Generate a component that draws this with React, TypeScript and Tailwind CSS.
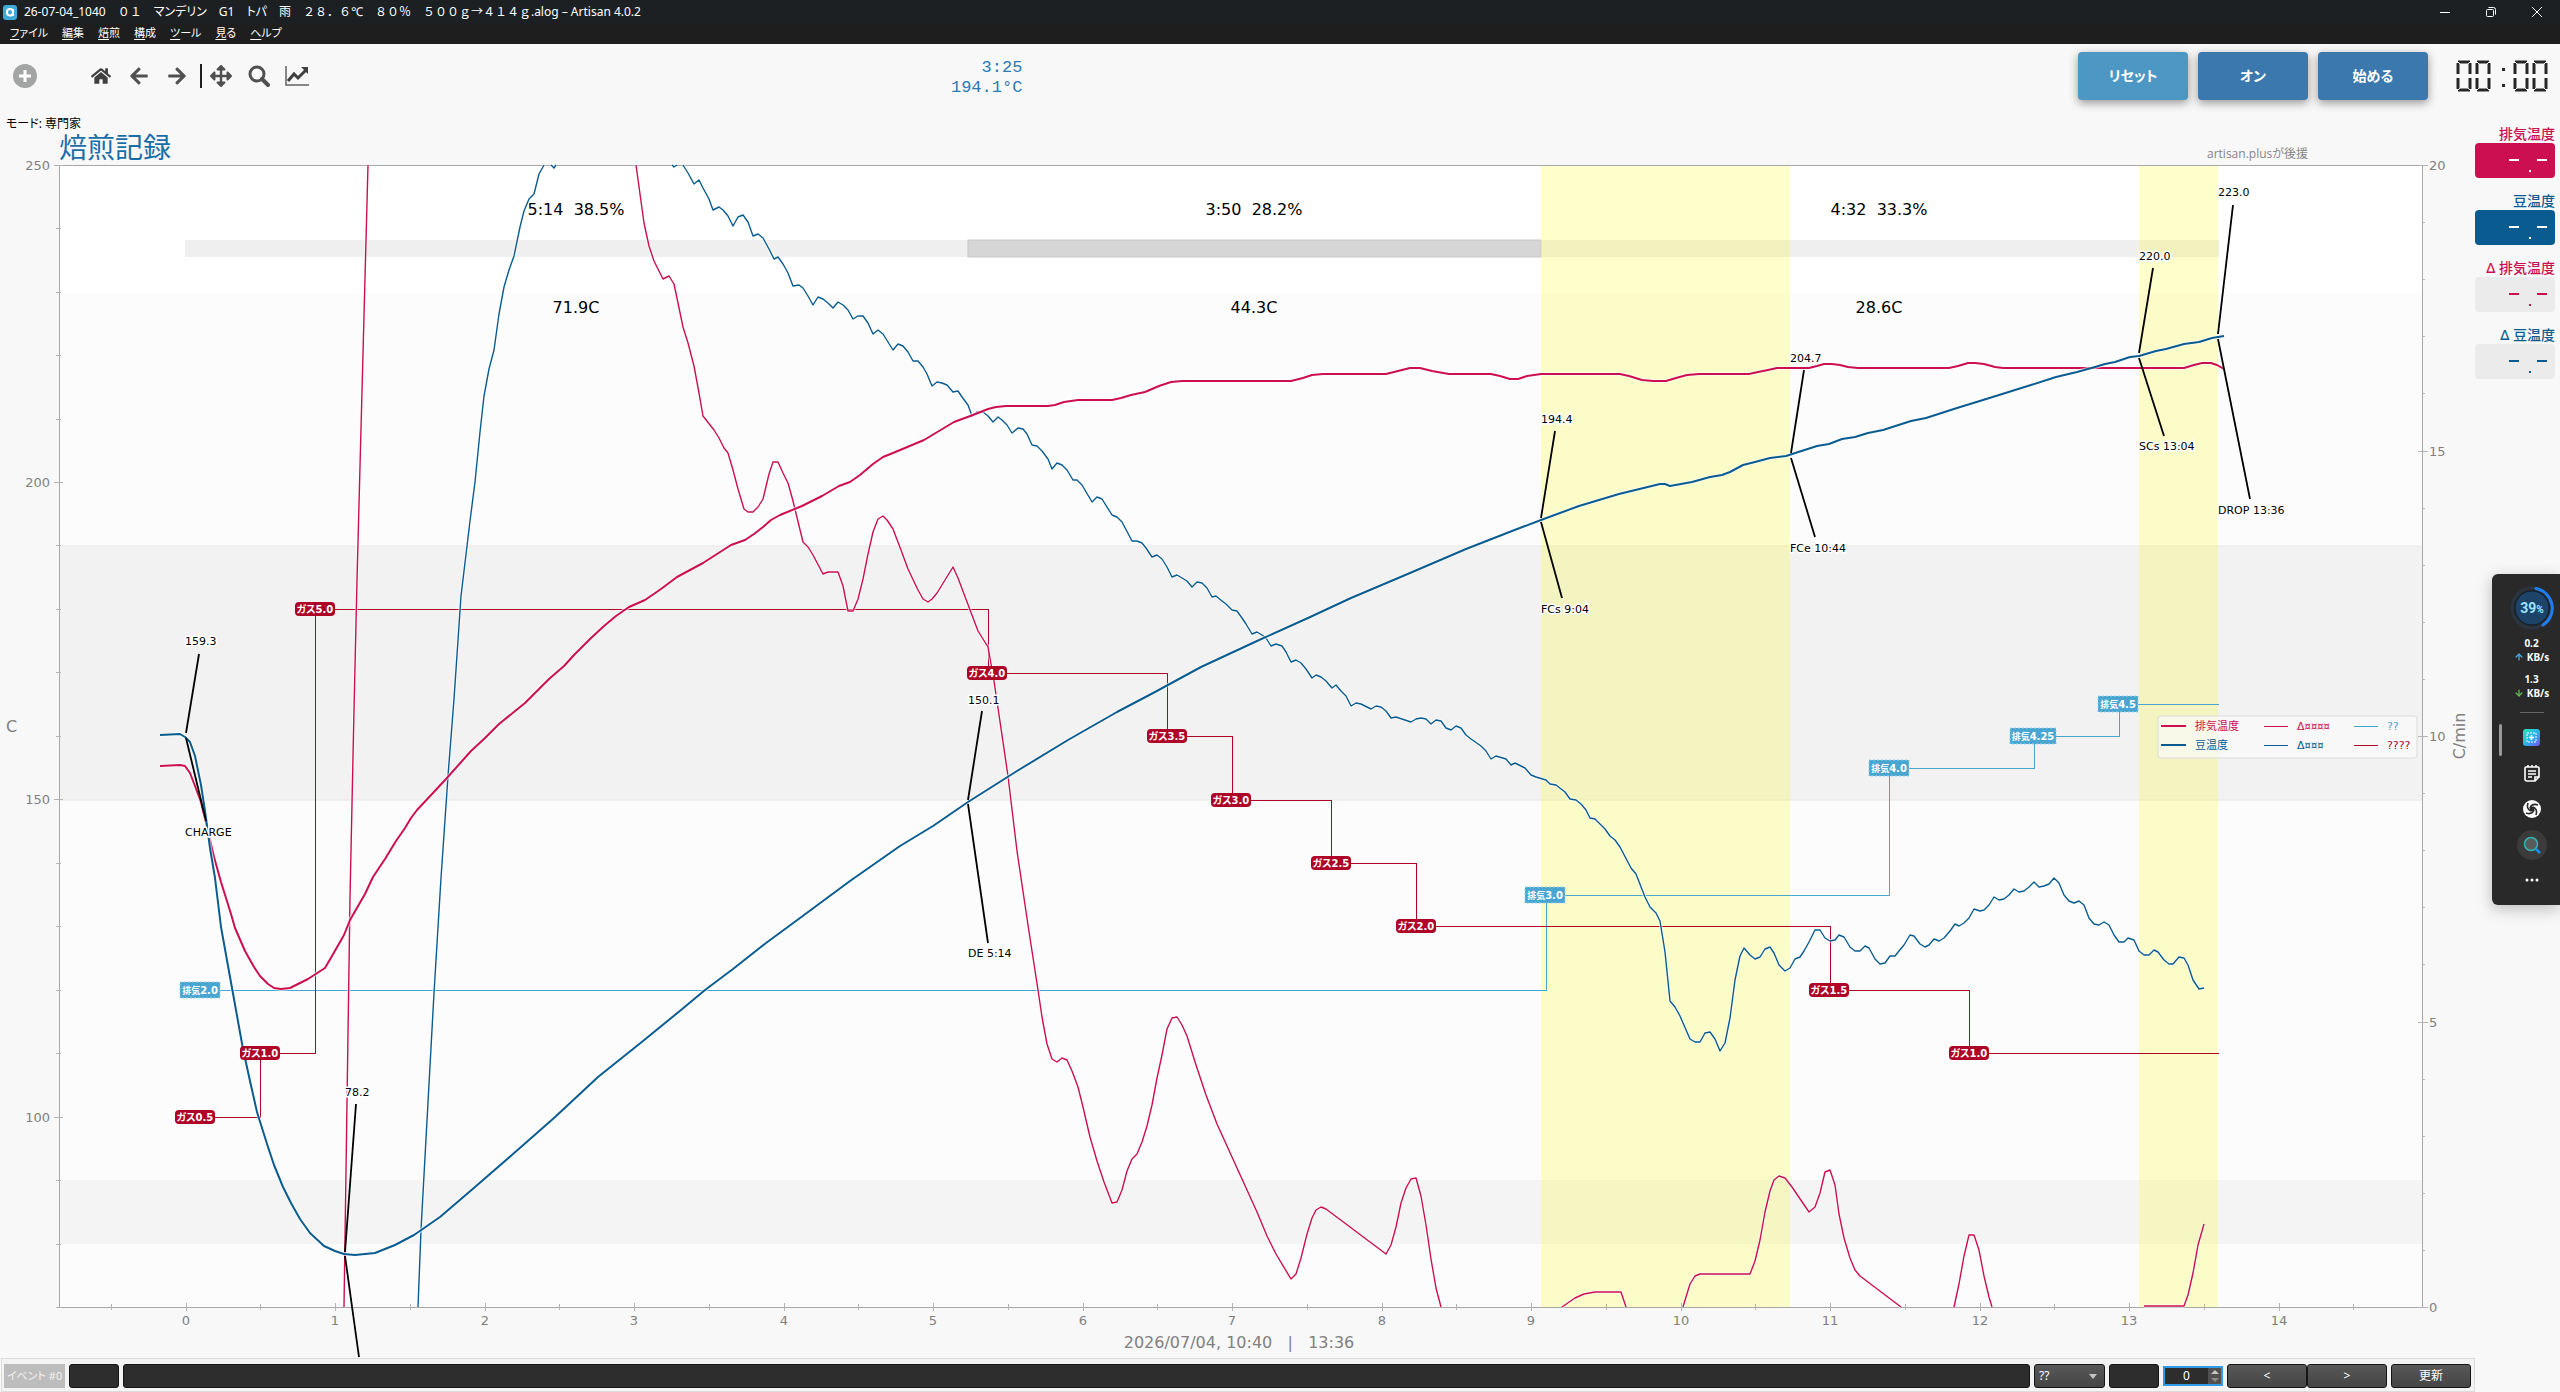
import React from "react";
import { FaArrowLeft, FaArrowRight, FaArrowsAlt, FaHome } from "react-icons/fa";
import { ArrowDown, ArrowUp } from "lucide-react";

// Chart space: one unit of time is one minute, temperatures run 70..250 °C
const LEFT = 59;
const RIGHT = 2422;
const TOP = 165;
const BOTTOM = 1307;
const timeX = (min: number) => Math.round(185.5 + min * 149.5);
const tempY = (temp: number) => Math.round(BOTTOM - (temp - 70) * 6.346);
const rateY = (rate: number) => Math.round(BOTTOM - rate * 57.1);

const ET = "#cc0f50";
const BT = "#0a5c90";
const GAS = "#ad0427";
const AIR = "#49a6d0";

const etCurve =
  "160,766 180,765 185,766 190,773 195,786 201,802 206,823 214,857 221,882 231,914 235,928 245,951 254,967 260,976 268,984 274,988 281,989 290,988 308,979 325,968 332,956 344,935 350,920 365,894 373,877 385,859 396,841 405,828 411,818 417,810 432,794 446,779 471,751 485,738 499,724 525,703 549,679 564,666 574,655 582,647 590,639 604,626 616,616 629,607 645,600 661,589 677,577 703,563 731,545 745,540 754,534 763,527 771,520 780,515 802,506 822,496 839,486 850,482 860,475 873,464 883,457 893,453 924,440 954,422 973,415 988,409 996,407 1006,406 1048,406 1055,405 1064,402 1078,400 1112,400 1121,398 1131,395 1145,392 1159,386 1171,382 1182,381 1291,381 1303,378 1312,375 1323,374 1386,374 1398,371 1410,368 1420,368 1432,371 1449,374 1491,374 1500,376 1510,379 1518,379 1527,376 1541,374 1620,374 1629,376 1642,380 1653,381 1666,381 1676,378 1687,375 1699,374 1749,374 1758,372 1768,370 1777,368 1809,368 1817,366 1824,364 1832,364 1840,365 1848,367 1858,368 1949,368 1958,366 1968,363 1975,363 1984,364 1995,367 2003,368 2184,368 2194,365 2202,363 2211,363 2217,365 2224,369";

const btCurve =
  "160,735 180,734 185,737 190,742 195,756 201,785 205,811 210,848 215,878 221,927 232,988 243,1049 250,1081 257,1112 262,1128 268,1147 274,1165 283,1187 291,1203 300,1219 310,1233 324,1246 335,1251 344,1254 355,1255 375,1253 395,1245 414,1235 440,1217 475,1187 513,1154 554,1118 598,1077 643,1041 681,1010 705,990 733,969 766,943 800,918 850,881 900,846 933,826 968,802 1017,771 1068,740 1117,712 1155,692 1201,667 1257,641 1308,618 1351,598 1410,573 1466,549 1512,531 1541,520 1579,506 1619,494 1660,484 1665,484 1670,486 1692,482 1710,477 1722,475 1730,472 1743,465 1755,462 1770,458 1786,456 1817,446 1829,444 1842,439 1855,437 1868,433 1883,430 1911,421 1926,418 1957,408 1983,400 2031,385 2056,377 2077,372 2095,367 2105,364 2115,362 2130,357 2139,356 2156,351 2166,349 2184,344 2199,342 2212,338 2224,336";

const deltaEt = [
  "344,1307 350,898 354,710 357,580 368,165",
  "636,165 644,223 649,246 654,261 663,279 669,276 674,284 678,303 683,327 688,343 694,366 699,393 703,416 714,430 719,438 724,448 728,453 733,470 738,489 744,509 748,512 753,512 758,507 763,499 769,474 773,462 778,462 783,473 788,483 793,501 803,542 808,547 813,555 823,574 828,572 838,572 843,586 848,611 853,611 858,599 863,579 868,554 873,532 878,519 883,516 887,520 893,529 901,550 908,569 918,590 923,599 928,602 932,599 937,593 953,567 958,578 978,631 988,647 994,681 998,708 1008,776 1017,851 1028,925 1038,990 1042,1017 1047,1044 1052,1059 1057,1062 1062,1058 1067,1060 1072,1071 1078,1087 1083,1107 1090,1137 1097,1161 1104,1182 1112,1203 1117,1202 1122,1190 1127,1171 1132,1159 1137,1154 1142,1142 1147,1126 1152,1105 1157,1078 1162,1055 1167,1029 1172,1018 1177,1017 1182,1025 1187,1036 1196,1065 1206,1095 1217,1124 1232,1157 1257,1212 1267,1236 1276,1254 1291,1279 1296,1274 1301,1258 1307,1234 1312,1218 1316,1210 1321,1207 1326,1209 1386,1254 1391,1245 1396,1227 1401,1203 1406,1188 1411,1179 1416,1178 1421,1196 1426,1225 1431,1259 1436,1288 1441,1307",
  "1562,1307 1575,1298 1584,1294 1595,1292 1621,1292 1626,1307",
  "1683,1307 1686,1297 1690,1284 1695,1276 1700,1274 1750,1274 1755,1261 1760,1240 1765,1212 1770,1191 1774,1180 1779,1176 1785,1178 1792,1187 1809,1212 1815,1207 1820,1193 1825,1172 1830,1170 1835,1185 1839,1214 1844,1238 1850,1258 1855,1270 1860,1276 1901,1307",
  "1954,1307 1959,1284 1964,1256 1969,1235 1974,1235 1979,1250 1984,1276 1989,1297 1992,1307",
  "2144,1306 2184,1306 2188,1295 2193,1273 2198,1245 2204,1224",
];

const deltaBt = [
  "418,1307 421,1230 434,993 441,878 448,776 454,699 461,596 470,521 475,482 480,432 484,396 489,369 494,350 499,314 504,287 509,270 514,256 520,227 524,211 529,199 534,194 539,174 544,165",
  "551,165 554,168 556,165",
  "672,165 674,167 677,165",
  "683,165 688,173 694,184 699,180 703,188 709,199 713,210 719,207 723,210 728,216 733,226 738,217 743,215 748,222 753,236 758,234 763,238 769,249 774,259 778,257 783,264 788,273 793,286 799,285 803,288 808,296 813,305 818,297 823,299 828,303 833,308 838,302 843,305 848,310 853,319 858,316 863,316 868,323 873,334 878,330 883,334 893,350 898,344 903,346 908,352 913,361 918,361 923,367 927,374 932,386 937,382 942,383 947,385 953,392 958,391 962,397 968,405 972,416 977,412 983,412 988,416 993,422 998,417 1002,420 1007,425 1012,433 1018,428 1023,429 1027,434 1032,445 1037,446 1042,451 1048,459 1052,469 1057,463 1062,465 1067,470 1073,480 1077,480 1082,485 1092,502 1097,497 1102,499 1112,515 1117,517 1122,522 1132,541 1137,541 1142,543 1146,548 1152,557 1157,555 1162,559 1167,567 1172,577 1177,575 1182,578 1187,581 1192,587 1197,582 1202,583 1207,588 1212,597 1216,596 1222,601 1226,604 1232,610 1237,611 1242,618 1246,624 1252,634 1257,632 1262,635 1266,638 1271,646 1276,644 1282,646 1286,652 1291,662 1296,660 1301,663 1306,669 1312,678 1316,675 1321,677 1326,681 1332,688 1336,685 1341,691 1346,696 1351,706 1356,703 1361,704 1371,709 1376,706 1381,707 1386,711 1391,718 1396,717 1411,722 1416,719 1421,718 1426,719 1431,724 1436,720 1441,721 1446,728 1451,730 1456,726 1461,728 1466,735 1471,739 1481,746 1486,751 1491,759 1496,756 1506,759 1511,765 1515,763 1525,768 1531,775 1536,777 1546,780 1550,784 1556,785 1565,792 1570,799 1576,800 1581,804 1586,810 1590,818 1595,819 1605,829 1610,836 1615,840 1620,847 1631,868 1636,874 1645,897 1650,907 1656,913 1660,921 1665,952 1670,1001 1675,1007 1680,1016 1690,1039 1695,1042 1700,1042 1705,1033 1710,1032 1715,1039 1720,1051 1725,1043 1730,1018 1735,980 1740,956 1744,948 1750,955 1755,959 1760,957 1765,949 1770,947 1774,953 1779,965 1785,971 1790,968 1795,959 1800,957 1804,951 1809,942 1815,930 1820,930 1825,938 1830,941 1835,940 1839,935 1844,937 1850,947 1855,951 1860,951 1865,946 1869,948 1875,959 1880,964 1885,963 1890,956 1895,956 1899,951 1904,945 1910,935 1914,936 1920,944 1925,947 1929,945 1934,939 1939,941 1944,938 1950,931 1955,924 1959,926 1964,923 1969,918 1974,909 1980,911 1984,910 1989,905 1994,897 1999,900 2004,899 2009,895 2014,889 2019,892 2024,891 2029,887 2034,882 2039,887 2044,886 2049,884 2054,878 2059,883 2064,895 2069,901 2074,903 2079,901 2084,905 2089,918 2094,924 2099,925 2104,922 2109,925 2114,935 2119,942 2124,942 2128,938 2134,940 2139,951 2144,955 2149,955 2154,950 2158,952 2164,960 2169,964 2173,964 2179,957 2184,958 2188,965 2193,980 2199,989 2204,988",
];

const gasSteps =
  "195,1117 260,1117 260,1053 315,1053 315,609 988,609 988,673 1167,673 1167,736 1232,736 1232,800 1331,800 1331,863 1416,863 1416,926 1830,926 1830,990 1969,990 1969,1053 2219,1053";
const airSteps =
  "200,990 1546,990 1546,895 1889,895 1889,768 2034,768 2034,736 2119,736 2119,704 2219,704";

const gasTags: [number, number, string][] = [
  [195, 1117, "0.5"],
  [260, 1053, "1.0"],
  [315, 609, "5.0"],
  [987, 673, "4.0"],
  [1167, 736, "3.5"],
  [1231, 800, "3.0"],
  [1331, 863, "2.5"],
  [1416, 926, "2.0"],
  [1829, 990, "1.5"],
  [1969, 1053, "1.0"],
];

const airTags: [number, number, string][] = [
  [200, 990, "2.0"],
  [1545, 895, "3.0"],
  [1889, 768, "4.0"],
  [2033, 736, "4.25"],
  [2118, 704, "4.5"],
];

// label, text x, text centre y, leader from x1,y1 to x2,y2
const notes: [string, number, number, number, number, number, number][] = [
  ["159.3", 185, 641, 199, 654, 186, 733],
  ["CHARGE", 185, 832, 186, 738, 206, 821],
  ["78.2", 345, 1092, 356, 1104, 345, 1252],
  ["", 0, 0, 345, 1256, 359, 1357],
  ["150.1", 968, 700, 982, 711, 968, 800],
  ["DE 5:14", 968, 953, 968, 804, 988, 943],
  ["194.4", 1541, 419, 1555, 431, 1541, 518],
  ["FCs 9:04", 1541, 609, 1541, 522, 1562, 598],
  ["204.7", 1790, 358, 1804, 370, 1791, 453],
  ["FCe 10:44", 1790, 548, 1791, 458, 1815, 537],
  ["220.0", 2139, 256, 2153, 268, 2139, 353],
  ["SCs 13:04", 2139, 446, 2139, 358, 2164, 436],
  ["223.0", 2218, 192, 2233, 205, 2218, 334],
  ["DROP 13:36", 2218, 510, 2218, 339, 2250, 499],
];

const phases = [
  { x: 576, time: "5:14\u00a0\u00a038.5%", rise: "71.9C" },
  { x: 1254, time: "3:50\u00a0\u00a028.2%", rise: "44.3C" },
  { x: 1879, time: "4:32\u00a0\u00a033.3%", rise: "28.6C" },
];

const range = (from: number, to: number, step: number) => {
  const out: number[] = [];
  for (let v = from; v <= to; v += step) out.push(v);
  return out;
};

const Curve = ({ points, color, width }: { points: string; color: string; width: number }) => (
  <g fill="none" strokeLinejoin="round">
    <polyline points={points} stroke="#fff" strokeOpacity={0.6} strokeWidth={width + 2} />
    <polyline points={points} stroke={color} strokeWidth={width} />
  </g>
);

const Axes = () => (
  <g>
    <g stroke="#a8a8a8" strokeWidth={1} shapeRendering="crispEdges">
      <line x1={LEFT} y1={TOP} x2={RIGHT} y2={TOP} />
      <line x1={LEFT} y1={BOTTOM} x2={RIGHT} y2={BOTTOM} />
      <line x1={LEFT} y1={TOP} x2={LEFT} y2={BOTTOM} />
      <line x1={RIGHT} y1={TOP} x2={RIGHT} y2={BOTTOM} />
    </g>
    <g stroke="#b4b4b4" strokeWidth={1} shapeRendering="crispEdges">
      {range(70, 250, 10).map((t) => (
        <line
          key={t}
          x1={t % 50 ? 56 : 54}
          x2={t % 50 ? 61 : 63}
          y1={tempY(t)}
          y2={tempY(t)}
        />
      ))}
      {range(0, 20, 1).map((r) => (
        <line
          key={r}
          x1={r % 5 ? 2422 : 2418}
          x2={r % 5 ? 2425 : 2428}
          y1={rateY(r)}
          y2={rateY(r)}
        />
      ))}
      {range(-0.5, 14.5, 0.5).map((m) => (
        <line
          key={m}
          x1={timeX(m)}
          x2={timeX(m)}
          y1={m % 1 ? 1304 : 1303}
          y2={m % 1 ? 1310 : 1311}
        />
      ))}
    </g>
    <g fill="#808080" fontSize={13}>
      {[250, 200, 150, 100].map((t) => (
        <text key={t} x={50} y={tempY(t) + 5} textAnchor="end">
          {t}
        </text>
      ))}
      {[20, 15, 10, 5, 0].map((r) => (
        <text key={r} x={2429} y={rateY(r) + 5}>
          {r}
        </text>
      ))}
      {range(0, 14, 1).map((m) => (
        <text key={m} x={timeX(m)} y={1325} textAnchor="middle">
          {m}
        </text>
      ))}
    </g>
    <g fill="#808080" fontSize={16}>
      <text x={6} y={732}>
        C
      </text>
      <text transform="translate(2465 736) rotate(-90)" textAnchor="middle">
        C/min
      </text>
      <text x={1239} y={1348} textAnchor="middle">
        {"2026/07/04, 10:40\u00a0\u00a0\u00a0|\u00a0\u00a0\u00a013:36"}
      </text>
    </g>
  </g>
);

const Legend = () => (
  <g fontSize={11}>
    <rect x={2158} y={716} width={259} height={42} rx={3} fill="#fbfbfb" fillOpacity={0.7} stroke="#dcdcdc" />
    <g strokeWidth={2}>
      <line x1={2161} x2={2186} y1={726} y2={726} stroke={ET} />
      <line x1={2161} x2={2186} y1={745} y2={745} stroke={BT} />
    </g>
    <g strokeWidth={1} shapeRendering="crispEdges">
      <line x1={2264} x2={2288} y1={726} y2={726} stroke={ET} />
      <line x1={2264} x2={2288} y1={745} y2={745} stroke={BT} />
      <line x1={2354} x2={2378} y1={726} y2={726} stroke={AIR} />
      <line x1={2354} x2={2378} y1={745} y2={745} stroke={GAS} />
    </g>
    <text x={2195} y={730} fill={ET}>排気温度</text>
    <text x={2195} y={749} fill={BT}>豆温度</text>
    <text x={2297} y={730} fill={ET}>Δ<tspan fontSize={10}>¤¤¤¤</tspan></text>
    <text x={2297} y={749} fill={BT}>Δ<tspan fontSize={10}>¤¤¤</tspan></text>
    <text x={2387} y={730} fill={AIR}>??</text>
    <text x={2387} y={749} fill={GAS}>????</text>
  </g>
);

const RoastChart = () => (
  <svg
    viewBox="0 132 2475 1226"
    className="block w-full h-auto font-['DejaVu_Sans','Noto_Sans_CJK_JP',sans-serif]"
    role="img"
    aria-label="焙煎記録"
  >
    <rect x={LEFT} y={TOP} width={RIGHT - LEFT} height={BOTTOM - TOP} fill="#fcfcfc" />
    <rect x={LEFT} y={TOP} width={RIGHT - LEFT} height={128} fill="#ffffff" />
    <rect x={LEFT} y={546} width={RIGHT - LEFT} height={254} fill="#f2f2f2" />
    <rect x={LEFT} y={1180} width={RIGHT - LEFT} height={64} fill="#f4f4f4" />
    <path d={`M${LEFT} 546H${RIGHT}M${LEFT} 800H${RIGHT}`} stroke="#e8e8e8" />

    <rect x={185} y={240} width={783} height={17} fill="#efefef" />
    <rect x={968} y={240} width={573} height={17} fill="#d6d6d6" stroke="#c8c8c8" />
    <rect x={1542} y={240} width={677} height={17} fill="#efefef" />
    <g fill="#ffff00" fillOpacity={0.2}>
      <rect x={1541} y={TOP} width={249} height={BOTTOM - TOP} />
      <rect x={2139} y={TOP} width={79} height={BOTTOM - TOP} />
    </g>
    <Axes />

    <g fill="none" strokeWidth={1} shapeRendering="crispEdges">
      <polyline points={airSteps} stroke={AIR} />
      <polyline points={gasSteps} stroke={GAS} />
    </g>
    {deltaEt.map((p) => (
      <Curve key={p} points={p} color={ET} width={1.4} />
    ))}
    {deltaBt.map((p) => (
      <Curve key={p} points={p} color={BT} width={1.4} />
    ))}
    <Curve points={etCurve} color={ET} width={2} />
    <Curve points={btCurve} color={BT} width={2} />

    {gasTags.map(([x, y, value]) => (
      <g key={`${x}-${y}`}>
        <rect x={x - 20} y={y - 7} width={40} height={14} rx={4} fill={GAS} />
        <text x={x} y={y + 4} textAnchor="middle" fill="#fff" fontSize={10} fontWeight={700}>
          ガス{value}
        </text>
      </g>
    ))}
    {airTags.map(([x, y, value]) => {
      const w = value.length > 3 ? 46 : 40;
      return (
        <g key={`${x}-${y}`}>
          <rect
            x={x - w / 2}
            y={y - 8}
            width={w}
            height={16}
            fill={AIR}
            stroke="#9fd0e6"
            strokeDasharray="2 2"
          />
          <text x={x} y={y + 4} textAnchor="middle" fill="#fff" fontSize={10} fontWeight={700}>
            <tspan fontSize={9}>排気</tspan>
            {value}
          </text>
        </g>
      );
    })}

    {notes.map(([label, x, y, x1, y1, x2, y2]) => (
      <g key={`${x1}-${y1}`}>
        <line x1={x1} y1={y1} x2={x2} y2={y2} stroke="#000" strokeWidth={1.8} />
        {label && (
          <text x={x} y={y + 4} fontSize={11} stroke="#fff" strokeWidth={3} style={{ paintOrder: "stroke" }}>
            {label}
          </text>
        )}
      </g>
    ))}
    {phases.map((p) => (
      <g key={p.x} fontSize={16} textAnchor="middle">
        <text x={p.x} y={215}>{p.time}</text>
        <text x={p.x} y={313}>{p.rise}</text>
      </g>
    ))}

    <text x={59} y={158} fontSize={28} fill="#1a6ea8" fontFamily="Liberation Sans, Noto Sans CJK JP">
      焙煎記録
    </text>
    <text x={2308} y={158} fontSize={12} fill="#858585" textAnchor="end" fontFamily="Open Sans, Noto Sans CJK JP">
      artisan.plusが後援
    </text>
    <Legend />
  </svg>
);

// Bars of one clock digit: x1, y1, x2, y2
const CLOCK_BARS = [
  [2, 2, 14, 2],
  [14, 3, 14, 14],
  [14, 18, 14, 29],
  [2, 30, 14, 30],
  [2, 18, 2, 29],
  [2, 3, 2, 14],
];

const ClockDigit = ({ x }: { x: number }) => (
  <g transform={`translate(${x} 0)`}>
    {CLOCK_BARS.map(([x1, y1, x2, y2]) => (
      <line key={`${x1}-${y1}-${y2}`} x1={x1} y1={y1} x2={x2} y2={y2} stroke="#262626" strokeWidth={3} />
    ))}
    <path d="M0 0l4 4M16 0l-4 4M0 32l4-4M16 32l-4-4" stroke="#f8f8f8" />
  </g>
);

const Clock = () => (
  <div role="timer" aria-label="00:00">
    <svg width={92} height={32} viewBox="0 0 92 32">
      <ClockDigit x={0} />
      <ClockDigit x={19} />
      <path d="M46 8h3v3h-3zM46 24h3v3h-3z" fill="#262626" />
      <ClockDigit x={57} />
      <ClockDigit x={76} />
    </svg>
  </div>
);

const readouts = [
  { label: "排気温度", text: "text-[#cc0f50]", box: "bg-[#cc0f50] text-white" },
  { label: "豆温度", text: "text-[#0a5c90]", box: "bg-[#0a5c90] text-white" },
  { label: "Δ 排気温度", text: "text-[#cc0f50]", box: "bg-[#ebebeb] text-[#cc0f50]" },
  { label: "Δ 豆温度", text: "text-[#0a5c90]", box: "bg-[#ebebeb] text-[#0a5c90]" },
];

const Readouts = () => (
  <aside className="w-[85px] shrink-0 pt-2 pr-[5px]">
    {readouts.map((r) => (
      <div key={r.label} className="h-[67px]">
        <p className={`text-right text-sm leading-[19px] font-medium whitespace-nowrap ${r.text}`}>{r.label}</p>
        <div className={`h-[35px] rounded-[4px] flex items-center justify-end ${r.box}`}>
          <svg width={80} height={35} stroke="currentColor" strokeWidth={2}>
            <path d="M34 17h10M54 28h2M62 17h10" />
          </svg>
        </div>
      </div>
    ))}
  </aside>
);

const menus = [
  ["フ", "ァイル"],
  ["編集", ""],
  ["焙煎", ""],
  ["構成", ""],
  ["ツ", "ール"],
  ["見る", ""],
  ["ヘ", "ルプ"],
];

const TitleBar = () => (
  <header className="h-11 bg-[#1e1e1e] text-white text-xs">
    <div className="h-6 flex items-center bg-[#1c2023] pl-[3px]">
      <svg width={14} height={15} viewBox="0 0 14 15" className="mr-[7px]">
        <rect width={14} height={15} rx={3} fill="#3fa9d8" />
        <path d="M10 4v7M10 8a3 3 0 1 1-6-1a3 3 0 0 1 6 0" fill="none" stroke="#fff" strokeWidth={2} />
      </svg>
      <h1 className="flex-1 whitespace-pre [font-feature-settings:normal]">
        26-07-04_1040　０１　<span className="[font-feature-settings:'palt']">マンデリン</span>　G1　<span className="[font-feature-settings:'palt']">トパ</span>　雨　２８．６℃　８０％　５００ｇ→４１４ｇ.alog – Artisan 4.0.2
      </h1>
      <div className="flex">
        <button className="w-[46px] h-5 grid place-items-center" aria-label="最小化">
          <svg width={10} height={10} stroke="#fff" fill="none">
            <path d="M0 5.5h10" />
          </svg>
        </button>
        <button className="w-[46px] h-5 grid place-items-center" aria-label="元に戻す">
          <svg width={10} height={10} stroke="#fff" fill="none">
            <rect x={0.5} y={2.5} width={7} height={7} rx={1} />
            <path d="M2.5.5h5a2 2 0 0 1 2 2v5" />
          </svg>
        </button>
        <button className="w-[46px] h-5 grid place-items-center" aria-label="閉じる">
          <svg width={10} height={10} stroke="#fff" fill="none">
            <path d="M0 0l10 10M10 0L0 10" />
          </svg>
        </button>
      </div>
    </div>
    <nav className="flex gap-[14px] pl-[10px] text-[11px] leading-[17px]">
      {menus.map(([key, rest]) => (
        <button key={key} className="whitespace-nowrap">
          <span className="underline underline-offset-2">{key.slice(0, 1)}</span>
          {key.slice(1) + rest}
        </button>
      ))}
    </nav>
  </header>
);

const tool = "w-[38px] h-8 grid place-items-center text-[#505050]";
const action = "w-[110px] h-12 rounded-[4px] shadow-[0_3px_10px_rgba(0,0,0,0.4)]";

const Toolbar = () => (
  <div className="h-[72px] flex items-start justify-between pt-2 pr-1">
    <div className="w-2/5 flex items-start justify-between">
      <div className="flex items-center pl-[13px] pt-2">
        <button className="mr-[45px]" aria-label="artisan.plus">
          <svg width={24} height={24} viewBox="0 0 24 24">
            <circle cx={12} cy={12} r={12} fill="#a2a5a3" />
            <path d="M12 6v12M6 12h12" stroke="#fff" strokeWidth={3} />
          </svg>
        </button>
        <button className={tool} aria-label="Home">
          <FaHome size={20} color="#404040" />
        </button>
        <button className={tool} aria-label="Back">
          <FaArrowLeft size={20} />
        </button>
        <button className={tool} aria-label="Forward">
          <FaArrowRight size={20} />
        </button>
        <span className="w-[2px] h-6 ml-1 bg-[#202020]" />
        <button className={tool} aria-label="Pan">
          <FaArrowsAlt size={22} />
        </button>
        <button className={tool} aria-label="Zoom">
          <svg width={22} height={22} viewBox="0 0 22 22" fill="none" stroke="#505050">
            <circle cx={9} cy={9} r={7} strokeWidth={3} />
            <path d="M14 14l6 6" strokeWidth={4} strokeLinecap="round" />
          </svg>
        </button>
        <button className={tool} aria-label="Edit">
          <svg width={24} height={20} viewBox="0 0 24 20" fill="none" stroke="#404040">
            <path d="M1 0v19h23" stroke="#606060" strokeWidth={1.5} />
            <path d="M3 15l6-7 4 4 8-8" strokeWidth={3} />
            <path d="M16 1h7v7z" fill="#404040" stroke="none" />
          </svg>
        </button>
      </div>
      <div className="pt-[6px] text-right text-[17px] leading-5 text-[#2a7bb5] font-['Liberation_Mono',monospace]">
        <p>3:25</p>
        <p>194.1°C</p>
      </div>
    </div>
    <div className="flex items-start gap-[10px] text-sm font-bold text-white">
      <button className={`${action} bg-[#4c97c3]`}>リセット</button>
      <button className={`${action} bg-[#3a78ae]`}>オン</button>
      <button className={`${action} bg-[#3a78ae]`}>始める</button>
      <div className="ml-[18px] mr-2 pt-2">
        <Clock />
      </div>
    </div>
  </div>
);

const dark = "h-6 rounded-[3px] border border-[#151515] bg-[#2d2d2d] text-white";
const raised =
  "h-6 w-20 rounded-[3px] border border-[#151515] bg-linear-to-b from-[#585858] to-[#454545] text-white text-xs";

const EventBar = () => (
  <footer className="h-[34px] ml-px flex items-center gap-1 pl-[2px] pr-[3px] pt-[2px] border border-[#dcdcdc] bg-[#f3f3f3] text-xs">
    <label htmlFor="event" className="w-[61px] h-6 text-[11px] leading-6 text-center bg-[#bdbdbd] text-[#f2f2f2] whitespace-nowrap">
      イベント #0
    </label>
    <input id="event" className={`${dark} w-[50px]`} />
    <input className={`${dark} flex-1 min-w-0`} aria-label="説明" />
    <div className="relative">
      <select
        className="block h-6 w-[71px] rounded-[3px] border border-[#151515] bg-linear-to-b from-[#585858] to-[#454545] text-white pl-1 appearance-none"
        aria-label="タイプ"
      >
        <option>??</option>
      </select>
      <svg width={8} height={5} className="absolute right-2 top-[10px] pointer-events-none">
        <path d="M0 0h8l-4 5z" fill="#c4c4c4" />
      </svg>
    </div>
    <input className={`${dark} w-[50px]`} aria-label="値" />
    <div className="flex w-[60px] h-5 border-2 border-[#2f9ae6] bg-[#2d2d2d] text-white">
      <input defaultValue="0" className="w-0 flex-1 text-center" aria-label="番号" />
      <span className="w-[13px] bg-[#505050] grid place-items-center">
        <svg width={8} height={12}>
          <path d="M0 4l4-4 4 4z" fill="#c4c4c4" />
          <path d="M0 8h8l-4 4z" fill="#8a8a8a" />
        </svg>
      </span>
    </div>
    <div className="flex">
      <button className={raised}>&lt;</button>
      <button className={raised}>&gt;</button>
    </div>
    <button className={raised}>更新</button>
  </footer>
);

const SystemDock = () => (
  <section className="absolute right-0 top-[574px] w-[68px] h-[331px] rounded-l-[6px] bg-[#292929] text-white shadow-[0_4px_16px_rgba(0,0,0,0.25)] flex flex-col items-center pl-[11px] pt-3 text-[10px] leading-[14px] font-bold">
    <span className="absolute left-[7px] top-[150px] w-[3px] h-8 rounded bg-[#9a9a9a]" />
    <svg width={44} height={44} viewBox="0 0 44 44" className="shrink-0 font-['Roboto',sans-serif]">
      <circle cx={22} cy={22} r={20} fill="none" stroke="#2b3440" strokeWidth={3} />
      <circle cx={22} cy={22} r={17} fill="#1d4468" stroke="#0e1c2b" strokeWidth={1} />
      <path d="M26 2.5A20 20 0 0 1 33 39" fill="none" stroke="#1f7df2" strokeWidth={3} strokeLinecap="round" />
      <text x={22} y={27} textAnchor="middle" fontSize={14} fontWeight={700} fill="#9fe3ff">
        39<tspan fontSize={10}>%</tspan>
      </text>
    </svg>
    <p className="mt-[6px]">0.2</p>
    <p className="flex items-center gap-[3px]">
      <ArrowUp size={10} strokeWidth={3} color="#45b0f0" />
      KB/s
    </p>
    <p className="mt-2">1.3</p>
    <p className="flex items-center gap-[3px]">
      <ArrowDown size={10} strokeWidth={3} color="#5fc44c" />
      KB/s
    </p>
    <span className="w-6 h-px mt-3 bg-[#666] shrink-0" />
    <button className="mt-4 w-[17px] h-[17px]" aria-label="キャプチャ">
      <svg width={17} height={17} viewBox="0 0 17 17">
        <defs>
          <linearGradient id="cap" x1="0" y1="0" x2="1" y2="1">
            <stop offset="0" stopColor="#35e0b0" />
            <stop offset="0.5" stopColor="#22b8ee" />
            <stop offset="1" stopColor="#7a4df0" />
          </linearGradient>
        </defs>
        <rect width={17} height={17} rx={3} fill="url(#cap)" />
        <path d="M4 4h9v9H4z" fill="none" stroke="#fff" strokeDasharray="2 1" />
        <path d="M8.5 6v5M6 8.5h5" stroke="#fff" strokeWidth={1.5} />
      </svg>
    </button>
    <button className="mt-[18px]" aria-label="メモ">
      <svg width={18} height={18} viewBox="0 0 18 18" fill="none" stroke="#fff" strokeWidth={1.6}>
        <path d="M12 17H4a2 2 0 0 1-2-2V4a1 1 0 0 1 1-1h12a1 1 0 0 1 1 1v9zM16 13h-4v4" />
        <path d="M5 7h8M5 10h8M5 13h4M5 1v2M9 1v2M13 1v2" />
      </svg>
    </button>
    <button className="mt-[18px]" aria-label="ブラウザー">
      <svg width={18} height={18} viewBox="0 0 18 18">
        {/* four blades turning round the hub */}
        <circle cx={9} cy={9} r={9} fill="#fff" />
        <circle cx={9} cy={9} r={2.5} fill="#292929" />
        <g fill="none" stroke="#292929" strokeWidth={1.6}>
          <path d="M7 8Q9 3 15 5" />
          <path d="M7 8Q9 3 15 5" transform="rotate(90 9 9)" />
          <path d="M7 8Q9 3 15 5" transform="rotate(180 9 9)" />
          <path d="M7 8Q9 3 15 5" transform="rotate(270 9 9)" />
        </g>
      </svg>
    </button>
    <button className="mt-3 w-[30px] h-[30px] rounded-full bg-[#3b3b3b] grid place-items-center shrink-0" aria-label="検索">
      <svg width={18} height={18} viewBox="0 0 18 18" fill="none">
        <circle cx={8} cy={8} r={6.5} stroke="#2fb6b4" strokeWidth={1.5} fill="#5a5a5a" />
        <path d="M13 13l4 4" stroke="#1b8df0" strokeWidth={2.5} />
      </svg>
    </button>
    <button className="mt-[18px]" aria-label="その他">
      <svg width={14} height={4} fill="#fff">
        <circle cx={2} cy={2} r={1.5} />
        <circle cx={7} cy={2} r={1.5} />
        <circle cx={12} cy={2} r={1.5} />
      </svg>
    </button>
  </section>
);

export const App: React.FC = () => (
  <div className="relative min-h-screen bg-[#f8f8f8] text-black font-['Noto_Sans','Noto_Sans_CJK_JP',sans-serif] [font-feature-settings:'palt']">
    <TitleBar />
    <Toolbar />
    <div className="flex">
      <main className="flex-1 min-w-0">
        <p className="h-4 pl-[6px] text-xs leading-[15px]">モード: 専門家</p>
        <RoastChart />
        <EventBar />
      </main>
      <Readouts />
    </div>
    <SystemDock />
  </div>
);

export default App;
